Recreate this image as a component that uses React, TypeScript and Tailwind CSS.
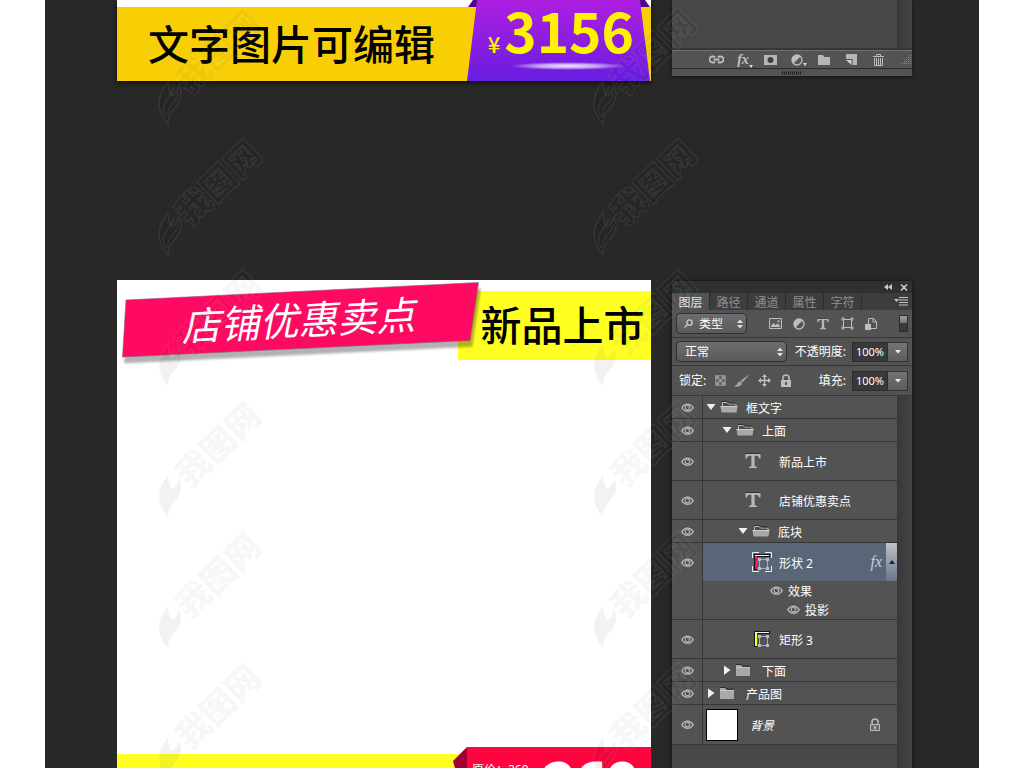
import { ReactNode, useState } from "react";
import clsx from "clsx";

type Layer = {
  id: string;
  name: string;
  kind: "group" | "text" | "shape" | "background";
  level: number;
  open?: boolean;
  color?: string;
  selected?: boolean;
  effects?: boolean;
};

const layers: Layer[] = [
  { id: "frame", name: "框文字", kind: "group", level: 0, open: true },
  { id: "top", name: "上面", kind: "group", level: 1, open: true },
  { id: "new", name: "新品上市", kind: "text", level: 2 },
  { id: "promo", name: "店铺优惠卖点", kind: "text", level: 2 },
  { id: "block", name: "底块", kind: "group", level: 2, open: true },
  {
    id: "shape2",
    name: "形状 2",
    kind: "shape",
    level: 3,
    color: "#ff0a62",
    selected: true,
    effects: true,
  },
  { id: "rect3", name: "矩形 3", kind: "shape", level: 3, color: "#ffff22" },
  { id: "bottom", name: "下面", kind: "group", level: 1 },
  { id: "product", name: "产品图", kind: "group", level: 0 },
  { id: "bg", name: "背景", kind: "background", level: 0 },
];

const tabs = ["图层", "路径", "通道", "属性", "字符"];

function EyeIcon() {
  return (
    <svg width="13" height="11" viewBox="0 0 13 11" fill="none">
      <path d="M1 4Q6.5 -2 12 4" stroke="#2c2c2c" />
      <path
        d="M.8 5.700Q3 2 6.500 2t5.700 3.700Q10 9.300 6.500 9.300T.8 5.700Z"
        stroke="#b4b4b4"
        strokeWidth="1.400"
      />
      <circle cx="6.500" cy="5.500" r="2.800" fill="#b4b4b4" />
      <circle cx="6.500" cy="5.400" r="1.600" fill="#333" />
      <circle cx="7" cy="4.900" r=".7" fill="#d0d0d0" />
    </svg>
  );
}

function FolderIcon({ open }: { open?: boolean }) {
  if (open) {
    return (
      <svg width="18" height="12" viewBox="0 0 18 12">
        <path d="M2.500 6V1.500h4.500l1.500 1.500h7.500V6" fill="#4a4a4a" stroke="#b9b9b9" />
        <path d="M2 .5h5.500l1.500 1.500h7.500" fill="none" stroke="#2d2d2d" />
        <path d="M.5 5.500h17l-1 6h-15z" fill="#a9a9a9" />
        <path d="M.5 5.500h17" stroke="#cfcfcf" />
      </svg>
    );
  }
  return (
    <svg width="14" height="12" viewBox="0 0 14 12">
      <path d="M0 .5h5.500l1.500 1.500h7" fill="none" stroke="#2d2d2d" />
      <path d="M0 1h5l1.500 2H14v9H0z" fill="#a9a9a9" />
      <path d="M0 3.500h14" stroke="#c4c4c4" />
    </svg>
  );
}

function Triangle({ open }: { open?: boolean }) {
  return (
    <svg width="10" height="10" viewBox="0 0 10 10" fill="#f0f0f0">
      <path d={open ? "M.5 2h9L5 8z" : "M2 .5v9.500L8.500 5z"} />
    </svg>
  );
}

function TypeIcon({ size }: { size: number }) {
  return (
    <svg width={size} height={size} viewBox="0 0 16 16">
      <path
        d="M.5 1h15v4.500h-1.300Q13.700 2.800 11.500 2.800H9.600v10q0 1 2.400 1V15H4v-1.200q2.400 0 2.400-1v-10H4.500Q2.300 2.800 1.800 5.500H.5z"
        fill="#b8b8b8"
      />
      <path d="M.5 .5h15" stroke="#2f2f2f" />
    </svg>
  );
}

function HalfCircleIcon() {
  return (
    <svg width="12" height="12" viewBox="0 0 12 12">
      <circle cx="6" cy="6" r="5" fill="#555" stroke="#bdbdbd" strokeWidth="1.300" />
      <path d="M9.700 2.300A5.200 5.200 0 1 0 2.300 9.700z" fill="#bdbdbd" />
    </svg>
  );
}

function PathBox() {
  return (
    <svg width="13" height="13" viewBox="0 0 13 13" fill="none" stroke="#c0c0c0">
      <path d="M3 2.500h7M3 10.500h7M2.500 3v7M10.500 3v7" />
      <path d="M1 1h2v2H1zM10 1h2v2h-2zM1 10h2v2H1zM10 10h2v2h-2z" />
    </svg>
  );
}

function ShapeThumb({ color, selected }: { color?: string; selected?: boolean }) {
  return (
    <svg width="20" height="20" viewBox="0 0 20 20" fill="none">
      {selected && (
        <path
          d="M.5 6V.5H7M13 .5h6.500V6M19.500 14v5.500H13M7 19.500H.5V14"
          stroke="#eee"
        />
      )}
      <path d="M2 18V2h16v3H5v13z" fill="#151515" />
      <path d="M4 17V4" stroke={color} strokeWidth="2" />
      <path d="M3 3.500h14" stroke="#f5f5f5" />
      <path d="M7 7.500h9M7 16.500h9M7.500 7v9M15.500 7v9" stroke="#a5a9b0" />
      <path
        d="M6.500 6.500h2v2h-2zM14.500 6.500h2v2h-2zM6.500 15.500h2v2h-2zM14.500 15.500h2v2h-2z"
        stroke="#c9ccd2"
      />
    </svg>
  );
}

function LockIcon({ outline }: { outline?: boolean }) {
  return (
    <svg width="12" height="14" viewBox="0 0 12 14" fill="none">
      <path d="M3 6V4a3 3 0 0 1 6 0v2" stroke="#bdbdbd" strokeWidth="1.500" />
      {outline ? (
        <path d="M1.500 6.500h9v6h-9z" fill="#6a6a6a" stroke="#bdbdbd" />
      ) : (
        <path d="M1 6h10v7H1z" fill="#bdbdbd" />
      )}
      <path d="M6 8v3" stroke={outline ? "#d0d0d0" : "#3c3c3c"} strokeWidth="1.500" />
    </svg>
  );
}

function UpDown() {
  return (
    <svg
      className="pointer-events-none absolute right-1 top-1/2 -translate-y-1/2"
      width="6"
      height="9"
      viewBox="0 0 6 9"
      fill="#e0e0e0"
    >
      <path d="M3 0l3 3.500H0zM3 9l3-3.500H0z" />
    </svg>
  );
}

function IconButton({ label, children }: { label: string; children: ReactNode }) {
  return (
    <button
      type="button"
      aria-label={label}
      className="flex h-4 w-4 items-center justify-center"
    >
      {children}
    </button>
  );
}

function PercentField({ id, label }: { id: string; label: string }) {
  const [value, setValue] = useState("100%");
  return (
    <div className="flex items-center gap-1.5">
      <label htmlFor={id} className="text-white">
        {label}
      </label>
      <div className="flex h-5">
        <input
          id={id}
          value={value}
          onChange={(e) => setValue(e.target.value)}
          className="w-9 border border-[#2c2c2c] bg-[#393939] text-center text-[11px] text-white outline-none"
        />
        <button
          type="button"
          aria-label={label}
          className="flex w-5 items-center justify-center border border-l-0 border-[#333] bg-linear-to-b from-[#747474] to-[#5c5c5c]"
        >
          <svg width="6" height="4" viewBox="0 0 6 4" fill="#eee">
            <path d="M0 0h6L3 3.500z" />
          </svg>
        </button>
      </div>
    </div>
  );
}

function LayerIcon({ layer }: { layer: Layer }) {
  if (layer.kind === "text") return <TypeIcon size={16} />;
  if (layer.kind === "shape") {
    return <ShapeThumb color={layer.color} selected={layer.selected} />;
  }
  if (layer.kind === "background") {
    return <div className="h-8 w-8 border border-black bg-white" />;
  }
  return (
    <div className="flex w-8 items-center gap-1">
      <Triangle open={layer.open} />
      <FolderIcon open={layer.open} />
    </div>
  );
}

function LayerRow({ layer }: { layer: Layer }) {
  return (
    <li className="border-b border-[#363636] bg-[#535353]">
      <div
        className={clsx(
          "flex",
          layer.kind === "group" && "h-[22px]",
          (layer.kind === "text" || layer.kind === "shape") && "h-[38px]",
          layer.kind === "background" && "h-[39px]"
        )}
      >
        <button
          type="button"
          aria-label={layer.name}
          className="flex w-[30px] shrink-0 items-center justify-center"
        >
          <EyeIcon />
        </button>
        <div
          className={clsx(
            "flex min-w-0 flex-1 items-center border-l border-[#363636] text-white",
            layer.selected && "bg-[#596678]",
            layer.kind === "group" && "gap-2",
            layer.kind === "group" && layer.level === 0 && "pl-[3px]",
            layer.kind === "group" && layer.level === 1 && "pl-[19px]",
            layer.kind === "group" && layer.level === 2 && "pl-[35px]",
            layer.kind === "text" && "gap-[18px] pl-[42px]",
            layer.kind === "shape" && "gap-[7px] pl-[49px]",
            layer.kind === "background" && "gap-3 pl-[3px]"
          )}
        >
          <LayerIcon layer={layer} />
          <span
            className={clsx("flex-1 pt-[3px]", layer.kind === "background" && "italic")}
          >
            {layer.name}
          </span>
          {layer.kind === "background" && (
            <span className="pr-4">
              <LockIcon outline />
            </span>
          )}
          {layer.effects && (
            <div className="flex h-full items-center gap-1">
              <span className="font-['Liberation_Serif',serif] text-base italic text-[#c9ced6]">
                fx
              </span>
              <span className="flex h-full w-[11px] items-center justify-center bg-linear-to-b from-[#bfc2c6] to-[#69788c]">
                <svg width="6" height="4" viewBox="0 0 6 4" fill="#222">
                  <path d="M0 4h6L3 0z" />
                </svg>
              </span>
            </div>
          )}
        </div>
      </div>
      {layer.effects && (
        <div className="ml-[30px] flex h-[38px] flex-col border-l border-[#363636] text-white">
          <div className="flex h-[19px] items-center gap-[5px] pl-[67px]">
            <EyeIcon />
            <span className="pt-0.5">效果</span>
          </div>
          <div className="flex h-[19px] items-center gap-[5px] pl-[84px]">
            <EyeIcon />
            <span className="pt-0.5">投影</span>
          </div>
        </div>
      )}
    </li>
  );
}

function PanelFooter() {
  return (
    <aside className="flex h-[76px] w-60 shrink-0 flex-col bg-[#474747] shadow-[0_1px_4px_rgba(0,0,0,0.5)]">
      <div className="flex flex-1 justify-end border-b-2 border-[#363636]">
        <div className="w-[15px] border-l border-[#363636] bg-linear-to-r from-[#393939] to-[#454545]" />
      </div>
      <div className="flex h-[18px] items-center border-t border-[#707070] bg-[#535353] pl-9">
        <div className="flex flex-1 items-center gap-[11px]">
          <IconButton label="链接">
            <svg width="15" height="9" viewBox="0 0 15 9" fill="none" stroke="#bdbdbd" strokeWidth="1.800">
              <path d="M6 6.500L5 7.500H3.500a3 3 0 0 1 0-6H5l1 1M9 2.500l1-1h1.500a3 3 0 0 1 0 6H10l-1-1M4.500 4.500h6" />
            </svg>
          </IconButton>
          <IconButton label="样式">
            <span className="flex items-end pl-1 font-['Liberation_Serif',serif] text-sm leading-4 font-bold italic text-[#c0c0c0]">
              fx
              <svg className="shrink-0" width="4" height="3" viewBox="0 0 4 3" fill="#ddd">
                <path d="M0 0h4L2 3z" />
              </svg>
            </span>
          </IconButton>
          <IconButton label="蒙版">
            <svg width="13" height="10" viewBox="0 0 13 10">
              <path d="M0 0h13v10H0z" fill="#b5b5b5" />
              <circle cx="6.500" cy="5" r="3" fill="#3e3e3e" />
            </svg>
          </IconButton>
          <IconButton label="调整">
            <span className="flex items-end pl-1">
              <HalfCircleIcon />
              <svg className="shrink-0" width="4" height="3" viewBox="0 0 4 3" fill="#ddd">
                <path d="M0 0h4L2 3z" />
              </svg>
            </span>
          </IconButton>
          <IconButton label="新组">
            <svg width="12" height="10" viewBox="0 0 12 10">
              <path d="M0 0h5l1 2h6v8H0z" fill="#b5b5b5" />
            </svg>
          </IconButton>
          <IconButton label="新建">
            <svg width="11" height="11" viewBox="0 0 11 11">
              <path d="M0 0h11v11H6.500V5H0z" fill="#b5b5b5" />
              <path d="M0 6h5.500v5z" fill="#d0d0d0" />
            </svg>
          </IconButton>
          <IconButton label="删除">
            <svg width="11" height="12" viewBox="0 0 11 12" fill="none" stroke="#bdbdbd">
              <path d="M0 2.500h11M3.500 2.500v-2h4v2M1.500 4v7.500h8V4M3.500 4v7M5.500 4v7M7.500 4v7" />
            </svg>
          </IconButton>
        </div>
        <svg width="11" height="11" viewBox="0 0 11 11" stroke="#8a8a8a" strokeDasharray="1 1">
          <path d="M9 1.500h2M7 3.500h4M5 5.500h6M3 7.500h8M1 9.500h10" />
        </svg>
      </div>
      <div className="flex h-2 items-center justify-center border-t border-[#2c2c2c] bg-[#535353]">
        <svg width="20" height="4" viewBox="0 0 20 4" stroke="#222" strokeDasharray="1 1" strokeWidth="3">
          <path d="M0 2h20" />
        </svg>
      </div>
    </aside>
  );
}

function LayersPanel() {
  const [tab, setTab] = useState("图层");
  return (
    <aside className="mt-px flex w-60 shrink-0 flex-col bg-[#535353] shadow-[0_0_5px_rgba(0,0,0,0.6)]">
      <div className="flex h-3 items-center justify-end gap-2 bg-[#303030] pr-1">
        <svg width="8" height="6" viewBox="0 0 8 6" fill="#ccc">
          <path d="M4 0v6L0 3zM8 0v6L4 3z" />
        </svg>
        <svg width="8" height="7" viewBox="0 0 8 7" stroke="#ccc" strokeWidth="1.600">
          <path d="M1 .5l6 6M7 .5l-6 6" />
        </svg>
      </div>
      <div className="flex h-[17px] items-stretch bg-[#3d3d3d]">
        {tabs.map((name) => (
          <button
            key={name}
            type="button"
            onClick={() => setTab(name)}
            className={clsx(
              "flex w-[38px] items-center justify-center border-r border-[#2c2c2c] pt-0.5",
              tab === name ? "bg-[#535353] text-[#e6e6e6]" : "text-[#8f8f8f]"
            )}
          >
            {name}
          </button>
        ))}
        <div className="flex flex-1 items-center justify-end pr-1">
          <svg width="14" height="9" viewBox="0 0 14 9" stroke="#c4c4c4">
            <path d="M0 2h5L2.500 5z" fill="#c4c4c4" stroke="none" />
            <path d="M5 .5h9M5 3h9M5 5.500h9M5 8h9" />
          </svg>
        </div>
      </div>

      <div className="flex h-7 items-center border-b border-[#363636] px-1">
        <div className="relative">
          <svg
            className="pointer-events-none absolute left-2 top-1.5"
            width="9"
            height="9"
            viewBox="0 0 9 9"
            fill="none"
            stroke="#ccc"
            strokeWidth="1.300"
          >
            <circle cx="5.500" cy="3.500" r="2.700" />
            <path d="M3.500 5.500L.5 8.500" />
          </svg>
          <select
            aria-label="类型"
            className="block h-[21px] w-[71px] appearance-none rounded-sm border border-[#2f2f2f] bg-linear-to-b from-[#6e6e6e] to-[#5a5a5a] pl-[22px] text-white"
          >
            <option>类型</option>
          </select>
          <UpDown />
        </div>
        <div className="flex flex-1 items-center justify-center gap-2">
          <IconButton label="像素">
            <svg width="13" height="11" viewBox="0 0 13 11">
              <path d="M.5 .5h12v10H.5z" fill="#5a5a5a" stroke="#bdbdbd" />
              <path d="M2 9V8l2.500-3 2 2L9 5.500 11 8v1z" fill="#bdbdbd" />
              <circle cx="9.500" cy="3.200" r="1" fill="#bdbdbd" />
            </svg>
          </IconButton>
          <IconButton label="调整">
            <HalfCircleIcon />
          </IconButton>
          <IconButton label="文字">
            <TypeIcon size={12} />
          </IconButton>
          <IconButton label="形状">
            <PathBox />
          </IconButton>
          <IconButton label="智能对象">
            <svg width="12" height="12" viewBox="0 0 12 12" fill="none" stroke="#bdbdbd">
              <path d="M3.500 6V.5h5l3 3v7H6M8 .5V4h3.500" />
              <path d="M0 6h6v6H0z" fill="#bdbdbd" stroke="none" />
            </svg>
          </IconButton>
        </div>
        <button
          type="button"
          aria-label="过滤"
          className="flex h-[17px] w-[9px] items-start border border-[#2c2c2c] bg-[#3a3a3a]"
        >
          <span className="h-[7px] flex-1 bg-linear-to-b from-[#a0a0a0] to-[#777]" />
        </button>
      </div>

      <div className="flex h-7 items-center justify-between border-b border-[#363636] px-1">
        <div className="relative">
          <select
            aria-label="正常"
            className="block h-[21px] w-[111px] appearance-none rounded-sm border border-[#2f2f2f] bg-linear-to-b from-[#6e6e6e] to-[#5a5a5a] pl-2 text-white"
          >
            <option>正常</option>
          </select>
          <UpDown />
        </div>
        <PercentField id="opacity" label="不透明度:" />
      </div>

      <div className="flex h-[29px] items-center justify-between pl-[7px] pr-1">
        <div className="flex items-center gap-1.5">
          <span className="text-white">锁定:</span>
          <IconButton label="透明像素">
            <svg width="11" height="11" viewBox="0 0 11 11">
              <path d="M.5 .5h10v10H.5z" fill="#6a6a6a" stroke="#8c8c8c" />
              <path d="M1 1h3v3H1zM7 1h3v3H7zM4 4h3v3H4zM1 7h3v3H1zM7 7h3v3H7z" fill="#999" />
            </svg>
          </IconButton>
          <IconButton label="画笔">
            <svg width="16" height="13" viewBox="0 0 16 13" fill="#a6a6a6">
              <path d="M16 0L8.500 8.500 6.500 6.800zM0 12.500q3-1 3.500-3.500Q5 7 6.500 7.800 8.500 9 7.500 10.800 5.500 13.500 0 12.500z" />
            </svg>
          </IconButton>
          <IconButton label="位置">
            <svg width="13" height="13" viewBox="0 0 13 13" fill="none" stroke="#c0c0c0">
              <path d="M6.500 2v9M2 6.500h9" strokeWidth="1.300" />
              <path
                d="M6.500 0L9 3H4zM6.500 13L9 10H4zM0 6.500L3 4v5zM13 6.500L10 4v5z"
                fill="#c0c0c0"
                stroke="none"
              />
            </svg>
          </IconButton>
          <IconButton label="全部">
            <LockIcon />
          </IconButton>
        </div>
        <PercentField id="fill" label="填充:" />
      </div>

      <div className="flex flex-1 border-t border-[#363636] bg-[#474747]">
        <ul className="flex-1">
          {layers.map((layer) => (
            <LayerRow key={layer.id} layer={layer} />
          ))}
        </ul>
        <div className="w-[15px] border-l border-[#363636] bg-linear-to-r from-[#393939] to-[#454545]" />
      </div>
    </aside>
  );
}

function PriceBanner() {
  return (
    <div className="flex h-[81px] flex-1 justify-between bg-[linear-gradient(#fff_7px,#f8cf04_7px)] shadow-[0_2px_5px_rgba(0,0,0,0.7)]">
      <p className="flex items-center pl-[31px] pt-1 text-[41px] leading-none font-medium text-black">
        文字图片可编辑
      </p>
      <div className="relative w-[184px]">
        <svg className="absolute inset-0" width="184" height="81" viewBox="0 0 184 81">
          <defs>
            <linearGradient id="purple" x1="0" y1="0" x2="0" y2="1">
              <stop offset="0" stopColor="#ad1fe0" />
              <stop offset="1" stopColor="#691de0" />
            </linearGradient>
            <radialGradient id="glow">
              <stop offset="0" stopColor="#fff" stopOpacity=".9" />
              <stop offset=".5" stopColor="#fff" stopOpacity=".6" />
              <stop offset="1" stopColor="#fff" stopOpacity="0" />
            </radialGradient>
          </defs>
          <path d="M6 0h6v7H1zM172 0h6l5 7h-10z" fill="#4c058c" />
          <path d="M10 0h163l10 81H0z" fill="url(#purple)" />
          <ellipse cx="101" cy="66" rx="58" ry="4" fill="url(#glow)" />
        </svg>
        <p className="relative flex items-baseline justify-end pr-[17px] text-[#fff200]">
          <span className="pr-1 text-[22px] leading-none font-medium">¥</span>
          <span className="text-[55px] leading-[58px] font-bold">3156</span>
        </p>
      </div>
    </div>
  );
}

function PosterTemplate() {
  return (
    <div className="relative flex flex-1 flex-col justify-between overflow-hidden bg-white pt-[11px]">
      <div className="flex justify-end">
        <p className="flex h-[69px] w-[193px] items-center justify-center bg-[#ffff22] pb-1 pl-4 text-[41px] leading-none font-medium whitespace-nowrap text-black">
          新品上市
        </p>
      </div>
      <div className="absolute left-[5px] top-0.5 flex h-[76px] w-[357px] items-center justify-center pb-1 pr-1">
        <svg
          className="absolute inset-0 overflow-visible drop-shadow-[2px_6px_1px_rgba(0,0,0,0.3)]"
          width="357"
          height="76"
          viewBox="0 0 357 76"
        >
          <path d="M4 18L356.500 .5 348 58.500 .5 75z" fill="#ff0a62" stroke="#8a5a80" strokeWidth=".6" />
        </svg>
        <p className="relative -rotate-3 text-[39px] leading-none italic text-white">
          店铺优惠卖点
        </p>
      </div>
      <div className="flex h-[21px] justify-end overflow-hidden bg-[linear-gradient(#fff_7px,#ffff22_7px)]">
        <div className="relative h-20 w-[198px] shrink-0">
          <svg className="absolute inset-0" width="198" height="80" viewBox="0 0 198 80">
            <path d="M14 0L0 14l14 50z" fill="#a30035" />
            <path d="M14 0h184v80H14z" fill="#ff0540" />
          </svg>
          <div className="relative flex items-start gap-3.5 pl-[19px] font-['Noto_Sans','Noto_Sans_CJK_SC',sans-serif] text-white">
            <span className="pt-[17px] text-xs leading-none">原价：269</span>
            <span className="text-[56px] leading-[66px] font-bold">269</span>
          </div>
        </div>
      </div>
    </div>
  );
}

function Watermark() {
  return (
    <svg className="h-[131px] w-[110px] shrink-0" viewBox="0 0 110 131">
      <g
        fill="#000"
        fillOpacity=".05"
        stroke="#fff"
        strokeOpacity=".07"
        strokeWidth="1.500"
      >
        <path d="M10 75Q-3 91 3 106q2 6 7 11 0-9 6-15 11-12 5-23-2 7-7 10-4-6-4-14z" />
        <path d="M8 110Q2 100 10 91q4-5 6-11M10 110q-1-8 5-14 5-5 5-10" fill="none" />
        <text
          x="60"
          y="58"
          textAnchor="middle"
          transform="rotate(-44 59 45)"
          fontSize="34"
          fontWeight="900"
        >
          我图网
        </text>
      </g>
    </svg>
  );
}

export default function App() {
  return (
    <div className="h-screen overflow-hidden bg-white px-[45px] font-['Noto_Sans_CJK_SC',sans-serif] text-xs leading-none">
      <main className="relative flex h-full flex-col overflow-hidden bg-[#282828] pl-[72px] pr-[67px]">
        <section className="mb-[199px] flex items-start gap-[21px]">
          <PriceBanner />
          <PanelFooter />
        </section>
        <section className="flex min-h-0 flex-1 gap-[21px] [&_aside]:font-['Noto_Sans','Noto_Sans_CJK_SC',sans-serif]">
          <PosterTemplate />
          <LayersPanel />
        </section>
        <div className="pointer-events-none absolute inset-0 flex gap-[325px] overflow-hidden pl-[113px] pt-[7px]">
          {[0, 1].map((col) => (
            <div key={col} className="flex flex-col">
              {[0, 1, 2, 3, 4, 5].map((row) => (
                <Watermark key={row} />
              ))}
            </div>
          ))}
        </div>
      </main>
    </div>
  );
}
